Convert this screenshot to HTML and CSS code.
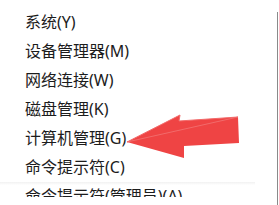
FILE: index.html
```html
<!DOCTYPE html>
<html lang="zh-CN">
<head>
<meta charset="utf-8">
<title>Win+X 菜单</title>
<link rel="stylesheet" href="styles.css">
</head>
<body>
<div class="screen">
  <ul class="menu">
    <li class="item">系统(Y)</li>
    <li class="item">设备管理器(M)</li>
    <li class="item">网络连接(W)</li>
    <li class="item">磁盘管理(K)</li>
    <li class="item">计算机管理(G)</li>
    <li class="item">命令提示符(C)</li>
    <li class="item item-cut">命令提示符(管理员)(A)</li>
  </ul>
  <div class="edge"></div>
  <svg class="arrow" width="279" height="205" viewBox="0 0 279 205">
    <polygon points="127,142 180,115 179,121 238,117 239,143 184,146 184,158" fill="#ef4444"/>
    <polygon points="127,142 180,115 179,121 238,117" fill="none" stroke="#f26a6a" stroke-width="1"/>
  </svg>
</div>
</body>
</html>
```

FILE: styles.css
```css
html, body {
  margin: 0;
  padding: 0;
  background: #ffffff;
}
body {
  width: 279px;
  height: 205px;
  overflow: hidden;
  font-family: "Noto Sans", "Noto Sans CJK SC", sans-serif;
}
.screen {
  position: relative;
  display: flex;
  width: 279px;
  height: 205px;
}
.menu {
  flex: 1;
  list-style: none;
  margin: 0;
  padding: 8px 0 0 25px;
}
.item {
  height: 29px;
  line-height: 29px;
  font-size: 16px;
  color: #1c1c1c;
  white-space: nowrap;
}
.item-cut {
  height: 15px;
  overflow: hidden;
  margin-left: -25px;
  padding-left: 25px;
  width: 230px;
  background: linear-gradient(to bottom, #f1f1f1 0, #ffffff 3px);
}
.edge {
  width: 1px;
  margin: 12px 1px 0 0;
  background: #8a8a8a;
}
.arrow {
  position: absolute;
  left: 0;
  top: 0;
}
```
